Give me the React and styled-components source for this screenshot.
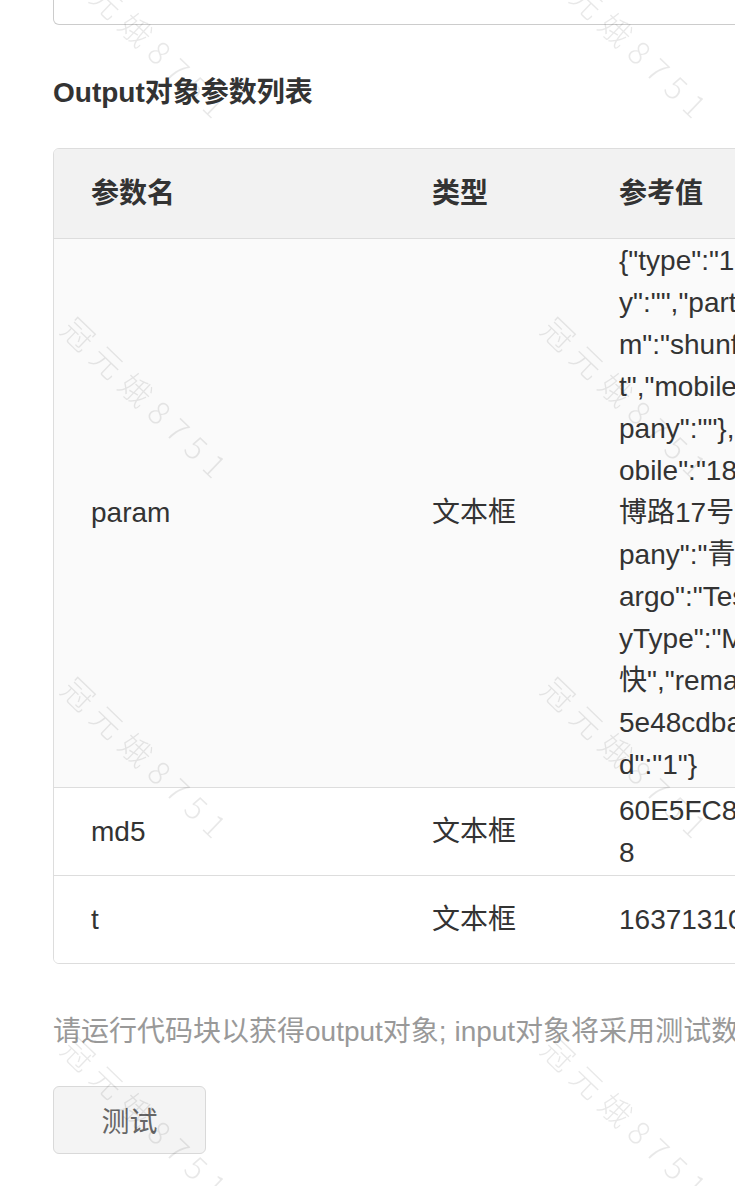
import React from "react";
import styled, { createGlobalStyle } from "styled-components";

const GlobalStyle = createGlobalStyle`
  html, body {
    margin: 0;
    padding: 0;
    background: #ffffff;
    overflow: hidden;
  }
  body {
    font-family: "Liberation Sans", "Noto Sans CJK SC", sans-serif;
    color: #333333;
  }
`;

const paramLines = [
  '{"type":"1","sender":{"compan',
  'y":"","partner":"","customerNu',
  'm":"shunfeng","name":"Tes',
  't","mobile":"","tel":"","com',
  'pany":""},"receiver":{"name":"","m',
  'obile":"18800000000","address":"淄',
  '博路17号","tel":"","com',
  'pany":"青岛某某科技有限公司"},"c',
  'argo":"Test","weight":"1","pa',
  'yType":"MONTHLY","expType":"顺丰标',
  '快","remark":"","orderId":"',
  '5e48cdba7f2c4d1e9a3b6c0f81d2e4a',
  'd":"1"}'
];

const rows = [
  { name: "param", type: "文本框", lines: paramLines, striped: true },
  { name: "md5", type: "文本框", lines: ["60E5FC8A1D3B47F29C0E6B5D4A7F321", "8"] },
  { name: "t", type: "文本框", lines: ["1637131012345"] }
];

const marks = Array.from({ length: 8 });

const App = () => {
  return (
    <>
      <GlobalStyle />
      <Page>
        <TopBox />

        <Heading>Output对象参数列表</Heading>

        <ParamTable>
          <HeaderRow>
            <HeadCell>参数名</HeadCell>
            <HeadCell>类型</HeadCell>
            <HeadCell>参考值</HeadCell>
          </HeaderRow>

          {rows.map((row) => (
            <BodyRow key={row.name} $striped={row.striped}>
              <Cell>{row.name}</Cell>
              <Cell>{row.type}</Cell>
              <ValueCell>
                {row.lines.map((line, i) => (
                  <ValueLine key={i}>{line}</ValueLine>
                ))}
              </ValueCell>
            </BodyRow>
          ))}
        </ParamTable>

        <Note>请运行代码块以获得output对象; input对象将采用测试数据，点击测试按钮查看结果</Note>

        <TestButton type="button">测试</TestButton>
      </Page>

      <WatermarkLayer aria-hidden="true">
        <WatermarkGrid>
          {marks.map((_, i) => (
            <WatermarkCell key={i}>
              <WatermarkText>冠元娥8751</WatermarkText>
            </WatermarkCell>
          ))}
        </WatermarkGrid>
      </WatermarkLayer>
    </>
  );
};

const Page = styled.div`
  width: 1100px;
  padding: 0 0 60px 53px;
  box-sizing: border-box;
`;

const TopBox = styled.div`
  height: 25px;
  box-sizing: border-box;
  border: 1px solid #cccccc;
  border-top: none;
  border-radius: 0 0 6px 6px;
`;

const Heading = styled.h3`
  margin: 47px 0 34px 0;
  padding: 0;
  font-size: 28px;
  line-height: 42px;
  font-weight: 700;
  color: #333333;
`;

const ParamTable = styled.div`
  border: 1px solid #dddddd;
  border-radius: 6px;
  overflow: hidden;
`;

const RowBase = styled.div`
  display: grid;
  grid-template-columns: 341px 187px 1fr;
  align-items: center;
  box-sizing: border-box;
`;

const HeaderRow = styled(RowBase)`
  height: 89px;
  background: #f2f2f2;
`;

const BodyRow = styled(RowBase)`
  min-height: 88px;
  border-top: 1px solid #dddddd;
  background: ${(p) => (p.$striped ? "#fafafa" : "#ffffff")};
`;

const HeadCell = styled.div`
  padding: 0 37px;
  font-size: 28px;
  line-height: 42px;
  font-weight: 700;
  color: #333333;
`;

const Cell = styled.div`
  padding: 1px 37px;
  font-size: 28px;
  line-height: 42px;
  color: #333333;
`;

const ValueCell = styled(Cell)`
  white-space: nowrap;
`;

const ValueLine = styled.div``;

const Note = styled.p`
  margin: 47px 0 0 0;
  font-size: 28px;
  line-height: 42px;
  color: #999999;
  white-space: nowrap;
`;

const TestButton = styled.button`
  margin-top: 33px;
  width: 153px;
  height: 68px;
  border: 1px solid #d9d9d9;
  border-radius: 6px;
  background: #f4f4f4;
  color: #666666;
  font-family: "Liberation Sans", "Noto Sans CJK SC", sans-serif;
  font-size: 28px;
  cursor: pointer;
`;

const WatermarkLayer = styled.div`
  position: fixed;
  inset: 0;
  pointer-events: none;
  overflow: hidden;
`;

const WatermarkGrid = styled.div`
  display: grid;
  grid-template-columns: repeat(2, 480px);
  grid-auto-rows: 360px;
  margin: -40px 0 0 60px;
`;

const WatermarkCell = styled.div`
  position: relative;
`;

const WatermarkText = styled.span`
  position: absolute;
  left: 24px;
  top: -14px;
  transform-origin: 0 0;
  transform: rotate(44deg);
  white-space: nowrap;
  font-family: "Noto Sans CJK SC", "Liberation Sans", sans-serif;
  font-size: 31px;
  font-weight: 300;
  letter-spacing: 9px;
  color: rgba(0, 0, 0, 0.09);
`;

export default App;
